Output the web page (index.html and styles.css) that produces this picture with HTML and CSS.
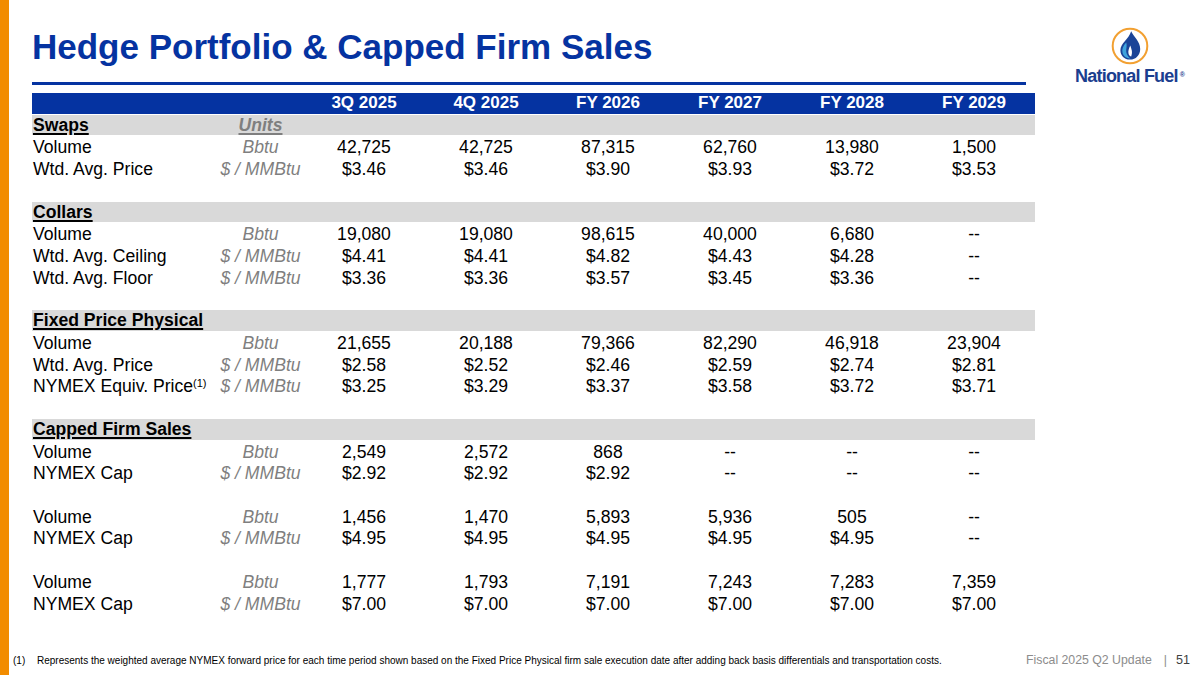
FILE: index.html
```html
<!DOCTYPE html>
<html lang="en">
<head>
<meta charset="utf-8">
<title>Hedge Portfolio &amp; Capped Firm Sales</title>
<link rel="stylesheet" href="styles.css">
</head>
<body>
<div class="page">
  <div class="main">
    <header class="top">
      <div class="heading">
        <h1 class="title">Hedge Portfolio &amp; Capped Firm Sales</h1>
        <div class="rule"></div>
      </div>
      <div class="logo">
        <svg class="logo-mark" viewBox="0 0 38 38" width="38" height="38" aria-hidden="true">
          <circle cx="19" cy="19" r="17.3" fill="#fff" stroke="#f2a031" stroke-width="2"/>
          <path d="M20.2 4.2 C22.5 9.5 29.2 14.2 29.2 22 C29.2 28.2 24.8 32.6 19 32.6 C13.4 32.6 9.4 28.6 9.4 23.2 C9.4 16.4 17.6 12.2 20.2 4.2 Z" fill="#1b4497"/>
          <path d="M15.2 15.6 C12 19 10.6 22.4 11.6 26 C12.7 29.6 16 31.6 19.4 31.4 C16.2 29.2 14.6 25.4 15.4 21.2 C15.7 19.4 15.8 17.4 15.2 15.6 Z" fill="#3fa3dc"/>
          <path d="M19.3 18.6 C18 21.2 16.8 24.2 17.6 27 C18 28.4 19.2 29.4 20.2 29.6 C20.8 27.8 21.2 25.8 20.8 23.6 C20.5 21.8 19.8 20.2 19.3 18.6 Z" fill="#ffffff"/>
        </svg>
        <div class="logo-text">National Fuel<sup class="reg">®</sup></div>
      </div>
    </header>

    <div class="table">
      <div class="row head">
        <div></div><div></div>
        <div class="c">3Q 2025</div><div class="c">4Q 2025</div><div class="c">FY 2026</div>
        <div class="c">FY 2027</div><div class="c">FY 2028</div><div class="c">FY 2029</div>
      </div>

      <div class="row section"><div class="lbl"><span class="sec">Swaps</span></div><div class="unit units-h">Units</div></div>
      <div class="row"><div class="lbl">Volume</div><div class="unit">Bbtu</div><div class="c">42,725</div><div class="c">42,725</div><div class="c">87,315</div><div class="c">62,760</div><div class="c">13,980</div><div class="c">1,500</div></div>
      <div class="row"><div class="lbl">Wtd. Avg. Price</div><div class="unit">$ / MMBtu</div><div class="c">$3.46</div><div class="c">$3.46</div><div class="c">$3.90</div><div class="c">$3.93</div><div class="c">$3.72</div><div class="c">$3.53</div></div>
      <div class="row blank"></div>

      <div class="row section"><div class="lbl"><span class="sec">Collars</span></div></div>
      <div class="row"><div class="lbl">Volume</div><div class="unit">Bbtu</div><div class="c">19,080</div><div class="c">19,080</div><div class="c">98,615</div><div class="c">40,000</div><div class="c">6,680</div><div class="c">--</div></div>
      <div class="row"><div class="lbl">Wtd. Avg. Ceiling</div><div class="unit">$ / MMBtu</div><div class="c">$4.41</div><div class="c">$4.41</div><div class="c">$4.82</div><div class="c">$4.43</div><div class="c">$4.28</div><div class="c">--</div></div>
      <div class="row"><div class="lbl">Wtd. Avg. Floor</div><div class="unit">$ / MMBtu</div><div class="c">$3.36</div><div class="c">$3.36</div><div class="c">$3.57</div><div class="c">$3.45</div><div class="c">$3.36</div><div class="c">--</div></div>
      <div class="row blank"></div>

      <div class="row section"><div class="lbl"><span class="sec">Fixed Price Physical</span></div></div>
      <div class="row"><div class="lbl">Volume</div><div class="unit">Bbtu</div><div class="c">21,655</div><div class="c">20,188</div><div class="c">79,366</div><div class="c">82,290</div><div class="c">46,918</div><div class="c">23,904</div></div>
      <div class="row"><div class="lbl">Wtd. Avg. Price</div><div class="unit">$ / MMBtu</div><div class="c">$2.58</div><div class="c">$2.52</div><div class="c">$2.46</div><div class="c">$2.59</div><div class="c">$2.74</div><div class="c">$2.81</div></div>
      <div class="row"><div class="lbl">NYMEX Equiv. Price<sup class="fn">(1)</sup></div><div class="unit">$ / MMBtu</div><div class="c">$3.25</div><div class="c">$3.29</div><div class="c">$3.37</div><div class="c">$3.58</div><div class="c">$3.72</div><div class="c">$3.71</div></div>
      <div class="row blank"></div>

      <div class="row section"><div class="lbl"><span class="sec">Capped Firm Sales</span></div></div>
      <div class="row"><div class="lbl">Volume</div><div class="unit">Bbtu</div><div class="c">2,549</div><div class="c">2,572</div><div class="c">868</div><div class="c">--</div><div class="c">--</div><div class="c">--</div></div>
      <div class="row"><div class="lbl">NYMEX Cap</div><div class="unit">$ / MMBtu</div><div class="c">$2.92</div><div class="c">$2.92</div><div class="c">$2.92</div><div class="c">--</div><div class="c">--</div><div class="c">--</div></div>
      <div class="row blank"></div>
      <div class="row"><div class="lbl">Volume</div><div class="unit">Bbtu</div><div class="c">1,456</div><div class="c">1,470</div><div class="c">5,893</div><div class="c">5,936</div><div class="c">505</div><div class="c">--</div></div>
      <div class="row"><div class="lbl">NYMEX Cap</div><div class="unit">$ / MMBtu</div><div class="c">$4.95</div><div class="c">$4.95</div><div class="c">$4.95</div><div class="c">$4.95</div><div class="c">$4.95</div><div class="c">--</div></div>
      <div class="row blank"></div>
      <div class="row"><div class="lbl">Volume</div><div class="unit">Bbtu</div><div class="c">1,777</div><div class="c">1,793</div><div class="c">7,191</div><div class="c">7,243</div><div class="c">7,283</div><div class="c">7,359</div></div>
      <div class="row"><div class="lbl">NYMEX Cap</div><div class="unit">$ / MMBtu</div><div class="c">$7.00</div><div class="c">$7.00</div><div class="c">$7.00</div><div class="c">$7.00</div><div class="c">$7.00</div><div class="c">$7.00</div></div>
    </div>
  </div>

  <footer class="footer">
    <p class="note"><span class="note-num">(1)</span>Represents the weighted average NYMEX forward price for each time period shown based on the Fixed Price Physical firm sale execution date after adding back basis differentials and transportation costs.</p>
    <div class="pageinfo"><span class="deck">Fiscal 2025 Q2 Update</span><span class="sep">|</span><span class="num">51</span></div>
  </footer>
</div>
</body>
</html>
```

FILE: styles.css
```css
* { box-sizing: border-box; }

html, body {
  margin: 0;
  padding: 0;
  background: #ffffff;
}

body {
  font-family: "Liberation Sans", Arial, Helvetica, sans-serif;
  color: #000000;
}

.page {
  width: 1200px;
  height: 675px;
  border-left: 9px solid #f28c00;
  display: flex;
  flex-direction: column;
  overflow: hidden;
}

.main {
  padding-left: 23px;
}

.top {
  display: flex;
  align-items: flex-start;
}

.heading {
  width: 994px;
  padding-top: 27px;
}

.title {
  margin: 0;
  font-size: 35px;
  line-height: 40px;
  font-weight: bold;
  color: #0533a1;
  letter-spacing: 0;
}

.rule {
  margin-top: 15px;
  height: 3px;
  background: #0533a1;
}

.logo {
  margin-left: 46px;
  padding-top: 27px;
  display: flex;
  flex-direction: column;
  align-items: center;
  width: 112px;
}

.logo-mark {
  display: block;
  margin-left: 3px;
}

.logo-text {
  margin-top: 2px;
  font-size: 18px;
  line-height: 18px;
  font-weight: bold;
  color: #1b3e8f;
  letter-spacing: -0.8px;
  white-space: nowrap;
  padding-left: 4px;
}

.reg {
  font-size: 7px;
  vertical-align: top;
  position: relative;
  top: -1px;
  margin-left: 2px;
  letter-spacing: 0;
}

.table {
  margin-top: 8px;
  width: 1003px;
}

.row {
  display: grid;
  grid-template-columns: 186px 85px repeat(6, 122px);
  height: 21.73px;
  font-size: 17.6px;
  line-height: 21.73px;
  white-space: nowrap;
}

.row > div {
  padding-top: 1px;
}

.head {
  background: #0533a1;
  color: #ffffff;
  font-weight: bold;
  font-size: 17px;
  border-bottom: 1px solid #ffffff;
  line-height: 20.73px;
}

.head > div { padding-top: 0; }

.section {
  background: #d9d9d9;
  border-bottom: 1px solid #ffffff;
  line-height: 20.73px;
}

.section > div { padding-top: 0; }

.lbl {
  padding-left: 1px;
}

.sec {
  font-weight: bold;
  text-decoration: underline;
  text-decoration-thickness: 1.5px;
  text-underline-offset: 2px;
}

.unit {
  text-align: center;
  font-style: italic;
  color: #7f7f7f;
}

.units-h {
  font-weight: bold;
  text-decoration: underline;
  text-decoration-thickness: 1.5px;
  text-underline-offset: 2px;
}

.c {
  text-align: center;
}

.fn {
  font-size: 11px;
  line-height: 0;
  vertical-align: 5px;
}

.footer {
  margin-top: auto;
  padding: 0 10px 8px 4px;
  display: flex;
  align-items: flex-end;
  justify-content: space-between;
}

.note {
  margin: 0;
  font-size: 10px;
  line-height: 12px;
  color: #000000;
  white-space: nowrap;
}

.note-num {
  display: inline-block;
  width: 24px;
}

.pageinfo {
  font-size: 12.3px;
  line-height: 14px;
  color: #8c8c8c;
  white-space: nowrap;
}

.sep {
  margin: 0 9px 0 12px;
}

.num {
  color: #404040;
  font-size: 12.6px;
}
```
